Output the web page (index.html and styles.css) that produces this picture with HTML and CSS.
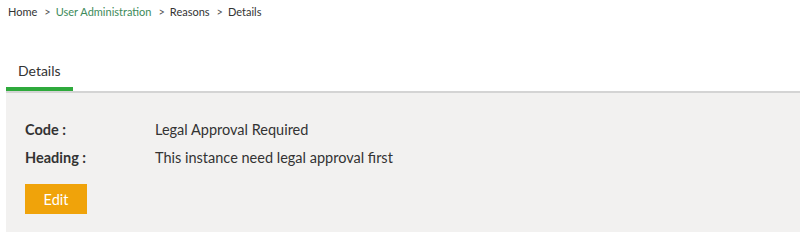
FILE: index.html
```html
<!DOCTYPE html>
<html>
<head>
<meta charset="utf-8">
<link rel="stylesheet" href="styles.css">
</head>
<body>
<nav class="crumbs">
  <span class="crumb">Home</span>
  <span class="sep">&gt;</span>
  <span class="crumb link">User Administration</span>
  <span class="sep">&gt;</span>
  <span class="crumb">Reasons</span>
  <span class="sep">&gt;</span>
  <span class="crumb">Details</span>
</nav>
<div class="tabs">
  <div class="tab active">Details</div>
</div>
<section class="panel">
  <div class="row"><div class="label">Code :</div><div class="value">Legal Approval Required</div></div>
  <div class="row"><div class="label">Heading :</div><div class="value">This instance need legal approval first</div></div>
  <button class="btn">Edit</button>
</section>
</body>
</html>
```
FILE: styles.css
```css
html, body { margin: 0; padding: 0; background: #fff; }
body { font-family: Lato, "Open Sans", sans-serif; color: #333; }
.crumbs { display: flex; align-items: center; gap: 5px; padding: 1px 0 0 8px; font-size: 11px; height: 20px; }
.crumb { color: #333; }
.crumb.link { color: #3d8a5a; }
.sep { color: #555; margin-left: 2px; }
.tabs { display: flex; margin: 38px 0 0 6px; }
.tab { padding: 0 12px; height: 28px; line-height: 24px; font-size: 14px; border-bottom: 4px solid transparent; color: #333; }
.tab.active { border-bottom-color: #2eaa3c; }
.panel { margin-left: 6px; background: #f2f1f0; border-top: 2px solid #d4d4d4; height: 141px; box-sizing: border-box; padding: 22px 0 0 19px; }
.row { display: flex; height: 28px; align-items: center; font-size: 14.5px; }
.label { width: 130px; font-weight: 700; color: #333; }
.value { color: #333; }
.btn { margin-top: 13px; width: 62px; height: 30px; border: none; background: #f0a30a; color: #fff; font-family: inherit; font-size: 14.5px; padding: 0; }
```
